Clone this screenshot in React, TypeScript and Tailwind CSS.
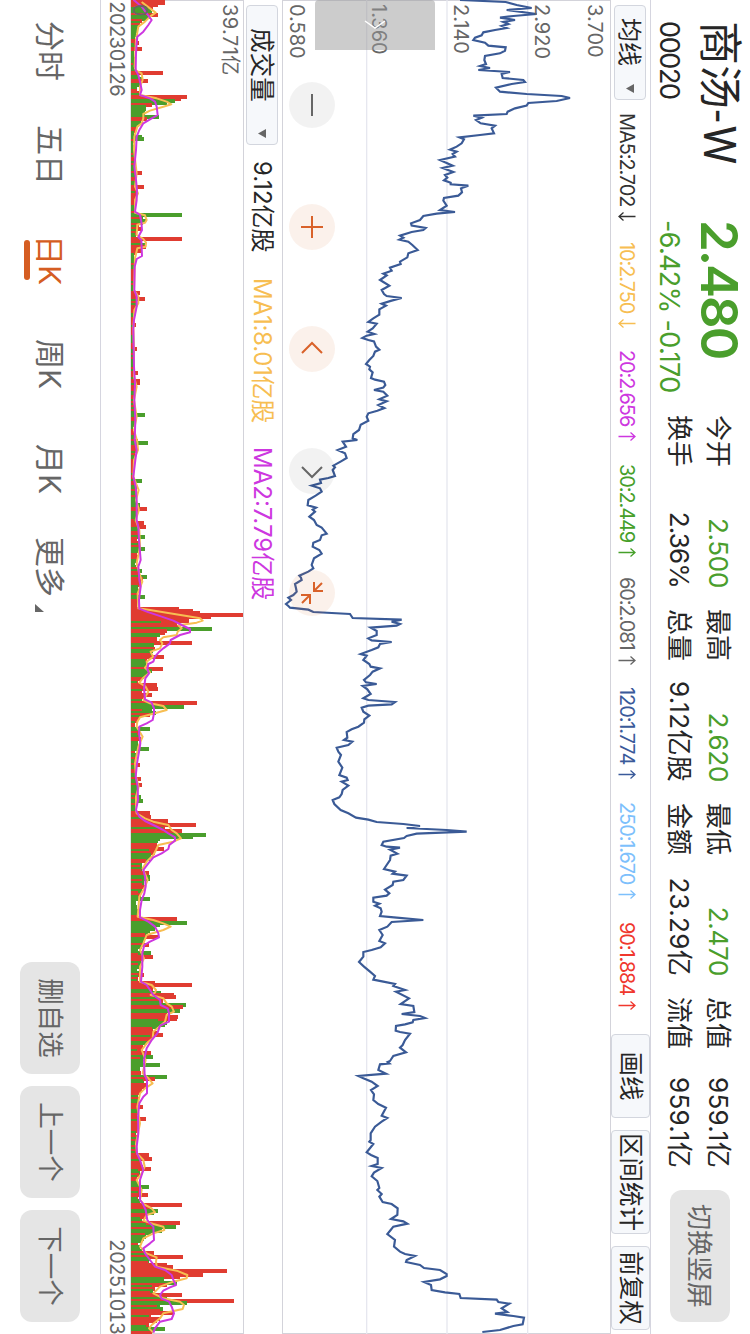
import React from 'react'
import clsx from 'clsx'

const UP = '#e03c31'
const DOWN = '#4a9e2c'

const quotes = [
  { top: ['今开', '2.500'], bottom: ['换手', '2.36%'], green: true, width: 'w-[173px]' },
  { top: ['最高', '2.620'], bottom: ['总量', '9.12亿股'], green: true, width: 'w-[173px]' },
  { top: ['最低', '2.470'], bottom: ['金额', '23.29亿'], green: true, width: 'w-[173px]' },
  { top: ['总值', '959.1亿'], bottom: ['流值', '959.1亿'], green: false, width: 'w-[171px]' }
]

const averages = [
  { label: 'MA5:2.702', up: false, color: 'text-[#333333]', width: 'w-[129px]' },
  { label: '10:2.750', up: false, color: 'text-[#f7be52]', width: 'w-[108px]' },
  { label: '20:2.656', up: true, color: 'text-[#cd37e0]', width: 'w-[114px]' },
  { label: '30:2.449', up: true, color: 'text-[#46a02a]', width: 'w-[113px]' },
  { label: '60:2.081', up: true, color: 'text-[#666666]', width: 'w-[110px]' },
  { label: '120:1.774', up: true, color: 'text-[#3a5a9a]', width: 'w-[115px]' },
  { label: '250:1.670', up: true, color: 'text-[#7dc0fc]', width: 'w-[120px]' },
  { label: '90:1.884', up: true, color: 'text-[#f0372d]', width: 'w-[110px]' }
]

// Series are [time, level] pairs, three units per pixel
const price =
  '0,660 6,797 15,830 24,875 30,800 42,890 48,820 53,780 60,825 66,790 72,805 78,785 84,800 90,765 97,730 106,725 113,705 120,700 128,735 137,745 142,797 152,795 160,780 168,735 180,733 192,738 198,720 204,750 210,715 216,810 222,785 234,788 240,850 246,855 252,815 263,768 275,780 282,860 288,965 294,990 303,950 309,865 317,860 325,825 335,803 342,800 347,700 353,725 360,708 370,722 377,765 385,755 400,762 405,720 412,658 418,672 430,665 440,650 449,630 455,650 462,638 470,645 480,600 487,615 497,638 504,608 516,640 525,615 533,622 541,612 548,632 553,632 557,685 565,663 577,666 587,655 594,612 602,610 617,620 630,600 636,645 641,590 648,550 660,540 670,513 677,515 684,557 690,550 696,515 707,480 713,490 719,478 725,505 735,517 ' +
  '750,533 760,505 772,502 785,480 792,482 803,450 812,455 821,430 826,440 840,420 846,430 857,448 870,425 882,432 888,440 894,485 902,455 911,425 917,438 928,418 944,418 955,400 966,385 971,410 985,398 995,383 1002,403 1007,380 1014,367 1020,385 1024,402 1040,408 1049,418 1055,405 1068,400 1080,388 1092,378 1100,390 1108,388 1117,398 1134,393 1139,405 1145,432 1155,436 1163,430 1170,402 1175,430 1187,442 1198,418 1204,440 1215,415 1224,433 1232,412 1240,385 1250,380 1262,385 1274,362 1290,357 1302,340 1315,338 1320,352 1325,308 1340,318 1350,293 1360,315 1374,320 1384,303 1397,280 1402,285 1410,278 1428,285 1434,265 1439,240 1449,243 1457,215 1465,240 ' +
  '1475,245 1487,227 1500,205 1516,203 1523,228 1529,218 1535,225 1550,208 1560,222 1575,230 1583,245 1601,260 1606,245 1620,240 1628,220 1640,218 1650,238 1661,245 1675,222 1695,215 1705,220 1715,205 1727,178 1733,183 1740,185 1752,165 1765,168 1775,170 1785,160 1793,145 1800,153 1812,138 1818,145 1823,150 1829,205 1836,220 1842,330 1854,338 1859,485 1865,455 1872,480 1877,470 1883,392 1893,410 1905,410 1915,385 1921,395 1926,455 1932,420 1942,415 1950,395 1962,362 1967,380 1980,370 1992,388 2000,392 2005,420 2015,398 2025,390 2040,372 2047,378 2052,410 2058,368 2068,382 2082,392 2095,370 2100,385 2106,465 2113,455 2117,385 2123,365 2135,370 2147,388 2158,373 2168,372 2180,355 2188,335 ' +
  '2196,320 2213,322 2220,312 2225,337 2235,325 2243,290 2255,295 2265,303 2285,295 2303,307 2325,298 2333,320 2340,323 2345,305 2357,325 2370,308 2382,305 2392,298 2400,278 2412,283 2430,302 2440,325 2453,348 2459,385 2466,410 2472,490 2478,540 2484,500 2490,620 2495,680 2501,530 2508,500 2514,492 2525,430 2535,425 2540,440 2543,480 2549,450 2561,472 2567,452 2580,450 2595,440 2607,432 2615,465 2621,458 2627,500 2640,490 2645,460 2655,458 2669,435 2680,448 2687,440 2693,400 2705,400 2711,418 2717,405 2725,422 2735,425 2748,420 2753,470 2760,550 2766,455 2780,442 2790,418 2805,428 2823,418 2830,435 2842,422 2850,395 2856,370 2870,370 2886,357 2900,372 2915,390 2928,405 2939,400 2945,430 2952,465 2958,460 2970,495 2975,468 2995,507 3012,482 3018,520 3036,523 3042,485 3048,540 3054,555 3060,520 3067,518 3073,495 3078,468 ' +
  '3092,467 3096,480 3101,510 3120,495 3135,488 3143,480 3157,498 3168,460 3183,450 3186,443 3190,448 3193,420 3210,415 3221,438 3228,355 3235,370 3245,395 3258,413 3270,393 3283,402 3300,400 3312,415 3323,438 3347,425 3354,442 3365,425 3380,405 3400,392 3420,392 3425,388 3432,400 3457,380 3465,393 3474,413 3492,413 3498,395 3504,425 3518,402 3529,395 3543,412 3564,418 3570,412 3582,425 3590,418 3606,428 3612,455 3625,473 3645,472 3657,453 3664,490 3671,502 3680,460 3690,452 3702,442 3720,465 3740,462 3755,480 3762,495 3768,525 3780,500 3786,498 3795,540 3804,552 3810,600 3822,620 3828,620 3838,600 3846,552 3855,573 3870,575 3877,615 3882,658 3894,662 3899,770 3906,775 3911,808 3925,785 3936,802 3941,765 3948,820 3953,852 3973,848 3978,820 3990,780 3996,727'

const volumeSlow =
  '0,400 3,405 20,425 40,440 60,455 75,445 95,430 110,412 130,410 160,408 210,407 225,415 245,420 270,425 285,420 295,450 305,465 320,470 345,473 355,455 370,430 390,418 410,410 450,408 500,403 530,407 570,411 600,410 635,405 645,420 665,424 690,426 705,418 712,415 720,424 768,426 777,410 800,404 870,403 890,410 920,410 940,406 960,402 985,400 1100,402 1150,405 1200,403 1260,406 1320,404 1350,410 1380,406 1430,400 1460,407 1500,410 1560,410 1580,415 1620,417 1680,422 1700,415 1740,418 1760,422 1800,417 1826,418 1835,440 1850,485 1862,520 1875,545 1887,570 1897,570 1905,540 1920,512 1930,510 1945,490 1955,478 1970,465 1985,460 1992,445 2007,442 ' +
  '2020,447 2035,436 2065,432 2098,435 2108,455 2125,462 2140,462 2160,458 2170,440 2180,418 2200,417 2230,421 2250,418 2290,411 2330,407 2360,413 2400,414 2430,408 2450,418 2463,435 2475,460 2490,490 2500,505 2512,525 2522,525 2535,508 2547,505 2560,485 2572,460 2590,445 2610,430 2630,435 2660,437 2680,433 2700,425 2730,420 2752,420 2765,445 2780,465 2800,475 2812,477 2825,450 2835,433 2860,427 2900,427 2945,423 2955,440 2970,450 2985,460 3000,480 3015,482 3025,503 3040,507 3065,507 3077,480 3100,472 3120,455 3145,440 3180,432 3225,434 3240,441 3280,441 3290,430 3310,418 3350,414 3400,415 3440,410 3460,411 3480,420 3510,430 3540,420 3600,420 3610,428 3630,437 3660,442 3670,450 3680,460 3720,462 3730,450 3745,430 3760,435 3780,450 3800,465 3810,495 3825,515 3840,520 3855,528 3862,510 3872,490 3885,480 3896,485 3905,507 3920,515 3940,522 3957,515 3965,480 3985,465 3998,460'

const volumeFast =
  '6,425 25,450 38,467 50,450 65,435 80,415 120,408 200,404 212,408 220,425 240,428 260,420 285,420 295,470 305,500 313,514 320,490 332,450 342,430 355,430 370,425 380,412 410,403 450,402 520,410 560,405 580,414 600,405 638,405 646,435 660,440 668,435 674,412 705,410 717,430 728,438 740,437 745,412 775,405 870,402 890,415 910,415 930,403 985,400 1050,402 1130,402 1160,410 1200,402 1250,410 1290,402 1325,412 1350,414 1380,402 1430,400 1470,416 1500,408 1530,417 1560,407 1590,418 1640,420 1690,410 1720,418 1745,427 1780,413 1825,415 1830,450 1838,500 1848,560 1855,600 1862,608 1868,590 1876,535 1885,545 1895,533 1905,530 1912,490 1920,480 1930,487 1945,480 1955,452 1962,455 1970,460 1985,440 1995,442 2003,435 2017,450 2033,430 ' +
  '2048,418 2060,437 2075,445 2100,430 2110,450 2118,490 2130,500 2138,470 2152,420 2165,412 2180,410 2210,428 2240,415 2290,405 2330,408 2360,416 2390,408 2430,408 2440,410 2455,435 2465,460 2475,505 2490,515 2500,530 2515,543 2525,520 2535,475 2550,468 2565,460 2585,440 2605,428 2640,443 2660,435 2690,418 2750,413 2760,460 2770,490 2780,512 2790,490 2805,440 2830,430 2850,420 2875,432 2900,420 2945,420 2955,455 2970,468 2978,465 2985,452 2995,490 3010,500 3020,515 3035,522 3045,500 3065,495 3080,478 3095,460 3115,458 3130,440 3150,425 3180,437 3220,428 3235,445 3250,458 3265,435 3280,420 3320,412 3370,420 3430,408 3460,411 3480,430 3500,434 3520,425 3540,410 3570,425 3600,420 3612,430 3625,455 3637,465 3645,440 3662,430 3672,460 3680,490 3690,493 3700,460 3715,430 3740,420 3760,440 3772,470 3785,468 3800,470 3812,530 3825,562 3835,560 3845,520 3860,480 3880,460 3895,490 3905,540 3915,552 3927,548 3940,490 3955,480 3975,455 3985,447 3998,460'

// Days that stand out, r = up, g = down
const peaks =
  '3r495 9r495 15r475 21r460 27g448 33g452 39g455 45r473 51g450 57g440 63r425 69g420 129r418 147r427 219r488 243r445 291r560 297r543 303g525 309g500 315r456 321g437 327g437 333g430 351g478 357r440 363r415 411g425 417g432 519r426 561r432 645g546 651g430 687r425 717r546 729r418 753r423 879r420 897r435 975r407 1047r410 1119r413 1143r421 1149r421 1245g435 1323r415 1329g443 1443g425 1515g420 1527r440 1569r432 1581r437 1611g434 1647g436 1713g425 1731g440 1737r430 1791g435 1827r537 1833r580 1839r600 1845r729 1851r632 1857r566 1863r566 1869g484 1875r530 1881r540 1887g635 1893r500 1899r496 1905g480 1911g470 1917r470 1923r464 1929r576 1935g463 1941g460 1947r466 1953g458 1959g452 1965r450 1971r491 1977r440 1983g436 2007r488 2013g455 ' +
  '2055r470 2067r474 2085r456 2109r590 2121g552 2127g455 2133r425 2187g450 2247g447 2295r420 2337r422 2355r427 2391g422 2403g429 2439r450 2451r453 2463r503 2469r500 2475r588 2481r495 2487g490 2493r545 2499r510 2505g618 2511g580 2517g480 2523g475 2529g470 2535r470 2547r492 2559r466 2619r447 2631g449 2637g449 2697g450 2757r530 2769g560 2775g480 2781g465 2787g465 2793g449 2811r475 2835r448 2859g453 2871r460 2925r431 2949r464 2955r576 2979g483 2985r522 2991r529 2997g475 3003r490 3009g480 3015g558 3021r550 3027r535 3033g540 3039g463 3045r500 3051r533 3057r530 3063g475 3069g500 3075g495 3081g470 3087r455 3093r460 3099r470 3105r489 3111g450 3129g440 3159r453 3171g459 3195g480 3231g500 3237r465 3321r429 3357r437 3465r446 3477r456 3507r452 ' +
  '3561g446 3585r444 3615r546 3633g473 3669r540 3681g527 3687r455 3759r463 3771r548 3777g450 3783g446 3795r500 3801r518 3807r500 3813r681 3819r560 3825r608 3831r540 3837g493 3843g480 3849g530 3855r500 3861g455 3885r546 3891r480 3897g500 3903r702 3909g560 3915g480 3921r470 3927g490 3933r480 3939r520 3957r480 3963r470 3987g495 3993g460'

type Point = [number, number]

const parse = (series: string): Point[] =>
  series.split(' ').map((p) => p.split(',').map(Number) as Point)

const toLine = (series: string, top: number) =>
  parse(series)
    .map(([t, level]) => `${t},${top - level}`)
    .join(' ')

const levelAt = (points: Point[], t: number) => {
  const next = points.findIndex((p) => p[0] >= t)
  if (next <= 0) return points[0][1]
  const [t0, a] = points[next - 1]
  const [t1, b] = points[next]
  return a + ((b - a) * (t - t0)) / (t1 - t0)
}

const FLOOR = 393

function buildBars() {
  const special = new Map<number, { up: boolean; level: number }>()
  peaks.split(' ').forEach((p) => {
    const [, t, side, level] = p.match(/(\d+)([rg])(\d+)/) as RegExpMatchArray
    special.set(Math.floor(Number(t) / 6), { up: side === 'r', level: Number(level) })
  })
  const envelope = parse(volumeFast)
  const bars: { up: boolean; height: number }[] = []
  let seed = 20
  let up = true
  for (let i = 0; i < 667; i++) {
    seed = (seed * 16807) % 2147483647
    const noise = (seed % 1000) / 1000
    const hit = special.get(i)
    if (seed % 7 < 3) up = !up
    if (hit) bars.push({ up: hit.up, height: hit.level - FLOOR })
    else bars.push({ up, height: (levelAt(envelope, i * 6) - FLOOR) * (0.6 + noise * 0.4) })
  }
  return bars
}

const bars = buildBars()

function Trend({ up }: { up: boolean }) {
  return (
    <svg width="9" height="18" viewBox="0 0 9 18" fill="none" stroke="currentColor" strokeWidth="1.3">
      {up ? <path d="M4.5 17.5V1M0.5 5.5L4.5 1L8.5 5.5" /> : <path d="M4.5 0.5V17M0.5 12.5L4.5 17L8.5 12.5" />}
    </svg>
  )
}

function Caret() {
  return (
    <svg width="9" height="8" viewBox="0 0 9 8" fill="#666666">
      <path d="M0 0H9L4.5 8Z" />
    </svg>
  )
}

function Header() {
  return (
    <header className="h-[100px] border-b border-[#d5d5df] flex text-[#262626]">
      <div className="w-[221px] pl-[21px] shrink-0">
        <h1 className="text-[44px] leading-[60px] h-[62px] whitespace-nowrap">
          商汤<span className="font-[Roboto] ml-px tracking-[3px]">-W</span>
        </h1>
        <p className="text-[27px] leading-[38px] tracking-[-1.4px]">00020</p>
      </div>
      <div className="w-[194px] shrink-0 text-[#4a9e2c] whitespace-nowrap">
        <p className="text-[51px] leading-[60px] h-[62px] pt-[1px] -ml-px font-semibold tracking-[-2px]">2.480</p>
        <p className="text-[27px] leading-[38px] -ml-px tracking-[-0.65px]">-6.42% -0.170</p>
      </div>
      <div className="flex gap-[21px] pt-[12px] text-[26px] leading-[39px] whitespace-nowrap">
        {quotes.map((quote) => (
          <div key={quote.top[0]} className={quote.width}>
            <div className="flex justify-between">
              <span>{quote.top[0]}</span>
              <span className={clsx(quote.green ? 'text-[#4a9e2c] tracking-[-0.3px]' : 'tracking-[0.3px]')}>
                {quote.top[1]}
              </span>
            </div>
            <div className="flex justify-between">
              <span>{quote.bottom[0]}</span>
              <span className={clsx(quote.bottom[1].endsWith('%') ? 'tracking-[-0.8px]' : 'tracking-[0.3px]')}>
                {quote.bottom[1]}
              </span>
            </div>
          </div>
        ))}
      </div>
      <button className="ml-auto mr-3 mt-5 w-[132px] h-[60px] rounded-xl bg-[#e5e5e5] text-[#666666] text-[26px]">
        切换竖屏
      </button>
    </header>
  )
}

function AverageBar() {
  return (
    <div className="h-[39px] flex items-center pl-[5px] text-[20px] whitespace-nowrap">
      <button className="w-[95px] h-8 mr-[13px] pl-3 pr-1.5 flex items-center justify-between shrink-0 rounded border border-[#d3d6de] bg-[#f6f8fb] text-[24px] text-[#262626]">
        <span className="pt-[2px]">均线</span>
        <Caret />
      </button>
      {averages.map((average) => (
        <div
          key={average.label}
          className={clsx('flex items-center gap-[6px] pt-[6px] shrink-0', average.color, average.width)}
        >
          <span className="tracking-[-1.1px]">{average.label}</span>
          <Trend up={average.up} />
        </div>
      ))}
      <div className="flex ml-auto mr-1 gap-3 text-[24.5px] text-[#262626]">
        <button className="w-[84px] h-[39px] rounded border border-[#d3d6de] bg-[#f6f8fb]">画线</button>
        <button className="w-[104px] h-[39px] rounded border border-[#d3d6de] bg-[#f6f8fb]">区间统计</button>
        <button className="w-[84px] h-[39px] rounded border border-[#d3d6de] bg-[#f6f8fb]">前复权</button>
      </div>
    </div>
  )
}

const controls = [
  { d: 'M12 23H34', accent: false },
  { d: 'M12 23H34M23 12V34', accent: true },
  { d: 'M27 13L17 23L27 33', accent: true },
  { d: 'M19 13L29 23L19 33', accent: false },
  { d: 'M12 21H21V12M13 13L21 21M34 25H25V34M33 33L25 25', accent: true }
]

function PriceChart() {
  return (
    <section className="relative h-[329px]">
      <svg className="block w-[1334px] h-[329px]" viewBox="0 0 4002 987" fill="none">
        <rect x="1.5" y="1.5" width="3999" height="984" stroke="#d3d3da" strokeWidth="3" />
        <path d="M0 250H4002M0 492H4002M0 733H4002" stroke="#e6e7ef" strokeWidth="4" />
        <polyline points={toLine(price, 1113)} stroke="#3a5a96" strokeWidth="6.5" />
      </svg>
      <div className="absolute left-[4px] top-0 text-[20px] leading-5 text-[#666666]">
        <p className="pt-[6px]">3.700</p>
        <p className="pt-[33px]">2.920</p>
        <p className="pt-[61px]">2.140</p>
        <p className="pt-[62px]">1.360</p>
        <p className="pt-[62px]">0.580</p>
      </div>
      <div className="absolute left-0 top-[176px] w-[50px] h-[120px] rounded-l-[4px] bg-[#999999]/50 flex items-center justify-center">
        <svg width="10" height="22" viewBox="0 0 10 22" fill="none" stroke="#ffffff" strokeWidth="1.5">
          <path d="M1 1L8 11L1 21" />
        </svg>
      </div>
      <div className="absolute left-[82px] top-[276px] flex gap-[76px]">
        {controls.map((control) => (
          <button
            key={control.d}
            className={clsx(
              'w-[46px] h-[46px] rounded-full',
              control.accent ? 'bg-[#d77337]/10 text-[#d9622a]' : 'bg-black/5 text-[#666666]'
            )}
          >
            <svg width="46" height="46" viewBox="0 0 46 46" fill="none" stroke="currentColor" strokeWidth="2">
              <path d={control.d} />
            </svg>
          </button>
        ))}
      </div>
    </section>
  )
}

function VolumeBar() {
  return (
    <div className="h-[38px] flex items-center pt-[2px] pl-[5px] text-[24px] whitespace-nowrap">
      <button className="w-[140px] h-8 pl-[22px] pr-1.5 mr-[16px] flex items-center justify-between shrink-0 rounded border border-[#d3d6de] bg-[#f6f8fb] text-[24.6px] text-[#262626]">
        <span>成交量</span>
        <Caret />
      </button>
      <span className="w-[117px] text-[#262626]">9.12亿股</span>
      <span className="w-[169px] tracking-[-0.25px] text-[#f7be52]">MA1:8.01亿股</span>
      <span className="text-[#cd37e0]">MA2:7.79亿股</span>
    </div>
  )
}

function VolumeChart() {
  return (
    <section className="relative h-[144px] border-b border-[#d5d5df]">
      <svg className="block w-[1334px] h-[114px]" viewBox="0 0 4002 342" fill="none">
        <rect x="1.5" y="1.5" width="3999" height="338" stroke="#d3d3da" strokeWidth="3" />
        <g shapeRendering="crispEdges">
          {bars.map((bar, i) => (
            <rect
              key={i}
              x={i * 6 - 3}
              y={339 - bar.height}
              width={12}
              height={bar.height}
              fill={bar.up ? UP : DOWN}
            />
          ))}
        </g>
        <polyline points={toLine(volumeFast, 732)} stroke="#f7be52" strokeWidth="6" strokeLinejoin="round" />
        <polyline points={toLine(volumeSlow, 732)} stroke="#cd37e0" strokeWidth="6" strokeLinejoin="round" />
      </svg>
      <p className="absolute left-[4px] top-[4px] text-[20px] leading-5 tracking-[0.4px] text-[#666666]">39.71亿</p>
      <p className="absolute left-[4px] top-[94px] text-[20px] leading-5 text-[#666666]">0</p>
      <div className="flex justify-between h-[26px] items-center text-[20px] pl-px tabular-nums tracking-[-1.1px] text-[#666666]">
        <span>20230126</span>
        <span>20251013</span>
      </div>
    </section>
  )
}

const periods = [
  { label: '分时', width: 'w-[104px]' },
  { label: '五日', width: 'w-[110px]' },
  { label: '日K', width: 'w-[104px]', active: true },
  { label: '周K', width: 'w-[105px]' },
  { label: '月K', width: 'w-[93px]' }
]

function Footer() {
  return (
    <footer className="h-[100px] flex items-center pl-[21px] pr-3 text-[30px] text-[#666666] whitespace-nowrap">
      {periods.map((period) => (
        <div key={period.label} className={clsx('relative', period.width, period.active && 'text-[#d55d22]')}>
          {period.label}
          {period.active && (
            <span className="absolute left-[5px] -bottom-[3px] w-10 h-1.5 rounded-full bg-[#d55d22]" />
          )}
        </div>
      ))}
      <div className="flex items-end">
        更多
        <svg className="mb-[8px] ml-[7px]" width="8" height="9" viewBox="0 0 8 9" fill="#666666">
          <path d="M8 0V9H0Z" />
        </svg>
      </div>
      <div className="flex gap-3 ml-auto text-[26.5px]">
        <button className="w-[112px] h-[60px] rounded-xl bg-[#e5e5e5]">删自选</button>
        <button className="w-[112px] h-[60px] rounded-xl bg-[#e5e5e5]">上一个</button>
        <button className="w-[112px] h-[60px] rounded-xl bg-[#e5e5e5]">下一个</button>
      </div>
    </footer>
  )
}

// Landscape page, turned to lie in a portrait viewport
export default function App() {
  return (
    <div className="relative w-[750px] h-[1334px] overflow-hidden bg-white">
      <main className="absolute top-0 left-full w-[1334px] h-[750px] origin-top-left rotate-90 bg-white font-[Inter,'Noto_Sans_CJK_SC',sans-serif]">
        <Header />
        <AverageBar />
        <PriceChart />
        <VolumeBar />
        <VolumeChart />
        <Footer />
      </main>
    </div>
  )
}
